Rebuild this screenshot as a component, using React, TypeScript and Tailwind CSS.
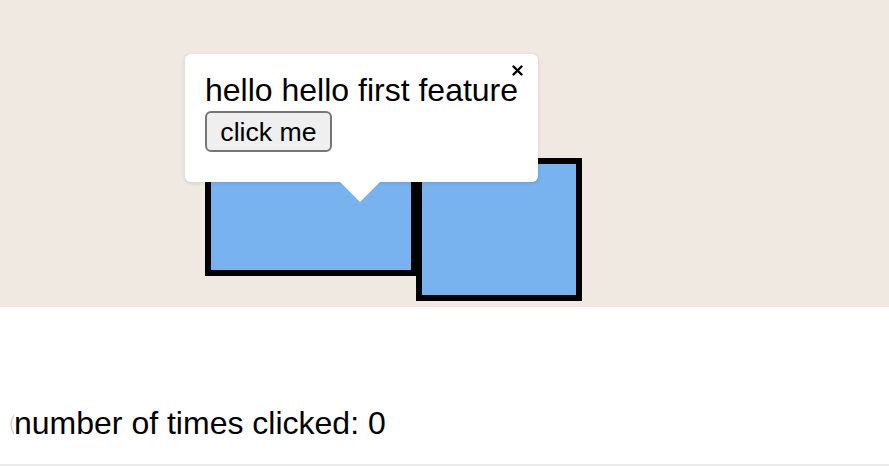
import React, { useState } from 'react';

// feature tour demo: two targets, a tooltip on the first one, and a click counter below
function Tooltip(props: { onClick: () => void }) {
    return (
        <div className="absolute left-[185px] top-[54px] w-[353px] h-[128px] bg-white rounded-[6px] shadow-[0_1px_4px_rgba(0,0,0,0.12)] px-[20px] pt-[18px]">
            <button className="absolute left-[327px] top-[11px] w-[11px] h-[11px] p-0">
                <svg width="11" height="11" viewBox="0 0 11 11">
                    <path d="M1.5 1.5 L9.5 9.5 M9.5 1.5 L1.5 9.5" stroke="#000" strokeWidth="2.4" strokeLinecap="round" />
                </svg>
            </button>
            <div className="text-[32px] leading-[37px] text-black whitespace-nowrap">hello hello first feature</div>
            <button
                onClick={props.onClick}
                className="mt-[2px] w-[127px] h-[41px] flex items-center justify-center border-2 border-[#767676] rounded-[6px] bg-[#efefef] text-[26.67px] text-black"
            >
                click me
            </button>
            <div className="absolute top-full left-[155px] w-0 h-0 border-l-[20px] border-r-[20px] border-t-[20px] border-l-transparent border-r-transparent border-t-white" />
        </div>
    );
}

export default function App() {
    const [count, setCount] = useState(0);
    return (
        <div className="w-[889px] h-[466px] flex flex-col bg-white font-['Liberation_Sans',Arial,sans-serif]">
            <div className="relative h-[307px] bg-[#f0e9e2] pl-[205px] pt-[158px] flex items-start">
                <div className="w-[212px] h-[118px] border-[6px] border-black bg-[#78b3f0]" />
                <div className="-ml-[1px] w-[166px] h-[143px] border-[6px] border-black bg-[#78b3f0]" />
                <Tooltip onClick={() => setCount(count + 1)} />
            </div>
            <div className="flex-1 pt-[98px]">
                <div className="flex items-center">
                    <svg width="14" height="30" viewBox="0 0 14 30" className="shrink-0">
                        <path d="M16 4 A16 16 0 0 0 16 27" fill="none" stroke="#d4d4d4" strokeWidth="1.5" />
                    </svg>
                    <span className="text-[32px] leading-[37px] text-black">number of times clicked: {count}</span>
                </div>
            </div>
            <div className="h-[2px] bg-[#ebebeb]" />
        </div>
    );
}
